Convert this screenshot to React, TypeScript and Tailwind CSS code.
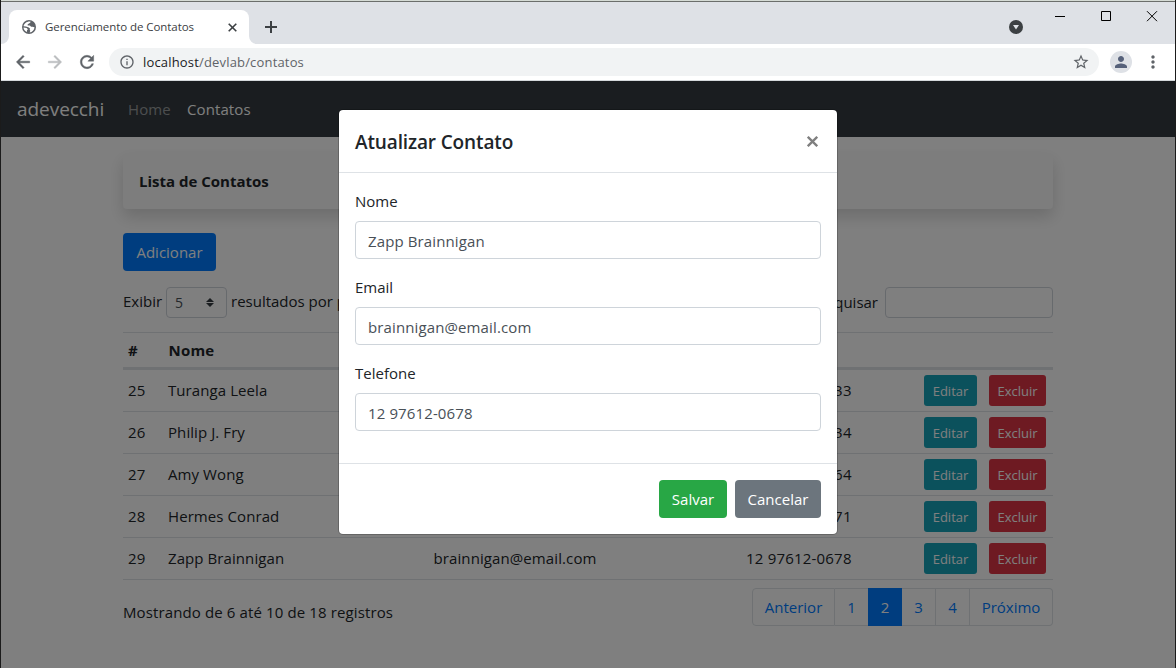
import type { ReactNode } from "react";
import { MdInfoOutline, MdStarBorder, MdMoreVert, MdPerson } from "react-icons/md";

const contacts = [
  { id: 25, name: "Turanga Leela", email: "leela@email.com", phone: "12 97612-0633" },
  { id: 26, name: "Philip J. Fry", email: "fry@email.com", phone: "12 97612-0634" },
  { id: 27, name: "Amy Wong", email: "amy@email.com", phone: "12 97612-0664" },
  { id: 28, name: "Hermes Conrad", email: "hermes@email.com", phone: "12 97612-0671" },
  { id: 29, name: "Zapp Brainnigan", email: "brainnigan@email.com", phone: "12 97612-0678" },
];

function NavIcon({ d, className }: { d: string; className: string }) {
  return (
    <svg className={`size-5 ${className}`} viewBox="0 0 24 24" fill="currentColor" stroke="currentColor" strokeWidth="0.5">
      <path d={d} />
    </svg>
  );
}

function TitleBar() {
  return (
    <div className="flex h-[42px] items-start bg-[#dee1e6] pl-2 text-[#3c4043]">
      <div className="relative mt-2 flex h-[34px] w-60 items-center rounded-t-lg bg-white pl-[13px] pr-[12px]">
        <svg className="absolute -left-2 bottom-0 size-2" viewBox="0 0 8 8">
          <path d="M8 0v8H0a8 8 0 0 0 8-8" fill="#fff" />
        </svg>
        <svg className="absolute -right-2 bottom-0 size-2" viewBox="0 0 8 8">
          <path d="M0 0v8h8a8 8 0 0 1-8-8" fill="#fff" />
        </svg>
        <svg className="size-[14px]" viewBox="0 0 14 14">
          <circle cx="7" cy="7" r="7" fill="#5f6368" />
          <path
            d="M8.400 1.500V2.600L7 3.500 5.700 4.300v1.100h2.200l1.200 1.300h1.300l2.100 0.600C12.300 10 10.300 12.300 7.700 12.500L8.300 10.800 7.700 9.700 8 8.600 6.300 7.200 3.900 6.500 1.600 6.300C1.900 3.600 4.500 1.300 8.400 1.500Z"
            fill="#fff"
          />
          <path d="M1.500 7.600 4.600 8 5.900 9.200 5 10.200v1.900C3 11.500 1.600 9.700 1.500 7.600Z" fill="#fff" />
        </svg>
        <span className="ml-[9px] flex-1 whitespace-nowrap text-[11.5px] tracking-[-0.07px]">
          Gerenciamento de Contatos
        </span>
        <svg className="size-[9px]" viewBox="0 0 9 9" stroke="#3c4043" strokeWidth="1.600">
          <path d="M.7.700l7.600 7.600M8.300.700L.7 8.300" />
        </svg>
      </div>
      <svg className="ml-4 mt-[19px] size-3" viewBox="0 0 12 12" stroke="#3c4043" strokeWidth="2">
        <path d="M6 0v12M0 6h12" />
      </svg>
      <div className="flex-1" />
      <svg className="mr-[32px] mt-[18px] size-[14px]" viewBox="0 0 14 14">
        <circle cx="7" cy="7" r="7" fill="#3c4043" />
        <path d="M4 5h6L7 9.500Z" fill="#dee1e6" />
      </svg>
      <svg className="mt-[9px] h-[11px] w-[103px]" viewBox="0 0 103 11" fill="none" stroke="#000">
        <path d="M0 5.500h10M46.500.5h9v9h-9zM92 .2l10 10M102 .2l-10 10" />
      </svg>
      <div className="w-[17px]" />
    </div>
  );
}

function Toolbar() {
  return (
    <div className="flex h-[37px] items-center border-b border-[#d5d9dc] bg-white pl-3 text-[#5f6368]">
      <NavIcon className="" d="M20 11H7.830l5.590-5.590L12 4l-8 8 8 8 1.410-1.410L7.830 13H20v-2z" />
      <NavIcon className="ml-3 text-[#bbbdbf]" d="M12 4l-1.410 1.410L16.170 11H4v2h12.170l-5.580 5.590L12 20l8-8z" />
      <NavIcon
        className="ml-3"
        d="M17.650 6.350C16.200 4.900 14.210 4 12 4c-4.420 0-7.990 3.580-7.990 8s3.570 8 7.990 8c3.730 0 6.840-2.550 7.730-6h-2.080c-.82 2.330-3.040 4-5.650 4-3.310 0-6-2.690-6-6s2.690-6 6-6c1.660 0 3.140.690 4.220 1.780L13 11h7V4l-2.350 2.350z"
      />
      <div className="ml-3 flex h-7 w-[990px] items-center rounded-full bg-[#f1f3f4] pl-[10px] pr-[9px]">
        <MdInfoOutline className="size-4" />
        <span className="ml-2 flex-1 text-[13px] tracking-[0.17px]">
          <span className="text-[#202124]">localhost</span>/devlab/contatos
        </span>
        <MdStarBorder className="size-[18px]" />
      </div>
      <div className="ml-[11px] flex size-[22px] items-center justify-center rounded-full bg-[#dee1e6]">
        <MdPerson className="size-[18px] text-[#56617a]" />
      </div>
      <MdMoreVert className="ml-[11px] size-5" />
    </div>
  );
}

function PageLink({ children, className }: { children: ReactNode; className: string }) {
  return (
    <a className={`flex h-[38px] items-center justify-center border-y border-r border-[#dee2e6] ${className}`}>
      {children}
    </a>
  );
}

function ContactsPage() {
  return (
    <div className="h-full bg-white">
      <nav className="flex h-14 items-center bg-[#343a40] pl-4">
        <span className="w-[111px] text-[19px] tracking-[-0.05px] text-white">adevecchi</span>
        <span className="w-[59px] text-[15px] tracking-[0.1px] text-white/50">Home</span>
        <span className="text-[15px] tracking-[0.1px] text-white">Contatos</span>
      </nav>
      <main className="ml-[122px] w-[930px] pt-4">
        <div className="flex h-14 items-center rounded bg-[#fafafa] px-4 font-bold shadow-[0_8px_16px_rgba(0,0,0,0.15)]">
          <span>Lista de Contatos</span>
        </div>
        <button className="mt-6 block h-[38px] w-[93px] rounded bg-[#007bff] text-white">Adicionar</button>
        <div className="mt-4 flex h-[31px] items-center whitespace-nowrap">
          <span className="w-[38px] pb-[3px]">Exibir</span>
          <div className="ml-[5px] flex h-[31px] w-[61px] items-center justify-between rounded border border-[#ced4da] pl-2 pr-3 text-[14px] text-[#495057]">
            5
            <svg className="h-[9px] w-2" viewBox="0 0 8 9" fill="#343a40">
              <path d="M4 0l4 4H0zM0 5h8L4 9z" />
            </svg>
          </div>
          <span className="ml-1 pb-[3px]">resultados por página</span>
          <span className="ml-auto pb-px">Pesquisar</span>
          <div className="ml-[7px] h-[31px] w-[168px] rounded border border-[#ced4da]" />
        </div>
        <div className="mt-[14px] flex h-[38px] items-center border-b-[3px] border-t border-[#dee2e6] pl-[5px] font-bold">
          <span className="w-[40.500px]">#</span>
          <span className="w-[265px] tracking-[0.2px]">Nome</span>
          <span className="w-[313px]">Email</span>
          <span>Telefone</span>
        </div>
        {contacts.map((c) => (
          <div key={c.id} className="flex h-[42px] items-center border-b border-[#dee2e6] pl-[5px]">
            <span className="w-10 pb-0.5 tracking-[0.15px]">{c.id}</span>
            <span className="w-[265.500px] pb-0.5 tracking-[0.08px]">{c.name}</span>
            <span className="w-[312.500px] pb-0.5 tracking-[0.1px]">{c.email}</span>
            <span className="w-[178px] pb-0.5 tracking-[0.2px]">{c.phone}</span>
            <button className="h-[31px] w-[53px] rounded-[3px] bg-[#17a2b8] text-[13px] text-white">Editar</button>
            <button className="ml-3 h-[31px] w-[57px] rounded-[3px] bg-[#dc3545] text-[13px] text-white">Excluir</button>
          </div>
        ))}
        <div className="mt-2 flex justify-between">
          <span className="mt-3 tracking-[0.12px]">Mostrando de 6 até 10 de 18 registros</span>
          <div className="flex text-[#007bff]">
            <PageLink className="w-[83px] rounded-l border-l">Anterior</PageLink>
            <PageLink className="w-[33px] border-r-0">1</PageLink>
            <div className="flex h-[38px] w-[34px] items-center justify-center bg-[#007bff] text-white">2</div>
            <PageLink className="w-[34px]">3</PageLink>
            <PageLink className="w-[34px]">4</PageLink>
            <PageLink className="w-[83px] rounded-r">Próximo</PageLink>
          </div>
        </div>
      </main>
    </div>
  );
}

function Field({ label, value }: { label: string; value: string }) {
  return (
    <label className="mb-4 block">
      <span className="mb-2 block h-6">{label}</span>
      <input
        readOnly
        value={value}
        className="block h-[38px] w-full rounded border border-[#ced4da] px-3 pt-0.5 tracking-[0.12px] text-[#495057] outline-none"
      />
    </label>
  );
}

function UpdateModal() {
  return (
    <div className="absolute left-[337px] top-7 w-[500px] rounded-[5px] border border-black/20 bg-white bg-clip-padding">
      <div className="flex h-[63px] items-center justify-between border-b border-[#dee2e6] pl-4 pr-[19px]">
        <h5 className="pt-0.5 text-[19px] font-semibold tracking-[-0.13px]">Atualizar Contato</h5>
        <svg className="size-[11px]" viewBox="0 0 11 11" stroke="#7f7f7f" strokeWidth="2.300">
          <path d="M.8.800l9.400 9.400M10.200.800L.8 10.200" />
        </svg>
      </div>
      <div className="h-[290px] p-4">
        <Field label="Nome" value="Zapp Brainnigan" />
        <Field label="Email" value="brainnigan@email.com" />
        <Field label="Telefone" value="12 97612-0678" />
      </div>
      <div className="flex h-[71px] items-center justify-end gap-2 border-t border-[#dee2e6] pr-4">
        <button className="h-[38px] w-[68px] rounded bg-[#28a745] text-white">Salvar</button>
        <button className="h-[38px] w-[86px] rounded bg-[#6c757d] text-white">Cancelar</button>
      </div>
    </div>
  );
}

export default function App() {
  return (
    <div className="flex h-[668px] w-[1176px] flex-col overflow-hidden border-x border-[#1b1b1b] font-['Open_Sans','Noto_Sans',sans-serif] text-[15px] leading-6 text-[#212529]">
      <div className="h-0.5 shrink-0 border-b border-[#6b6e6b] bg-[#d5dbd5]" />
      <TitleBar />
      <Toolbar />
      <div className="relative min-h-0 flex-1">
        <ContactsPage />
        <div className="absolute inset-0 bg-black/50" />
        <UpdateModal />
      </div>
    </div>
  );
}
